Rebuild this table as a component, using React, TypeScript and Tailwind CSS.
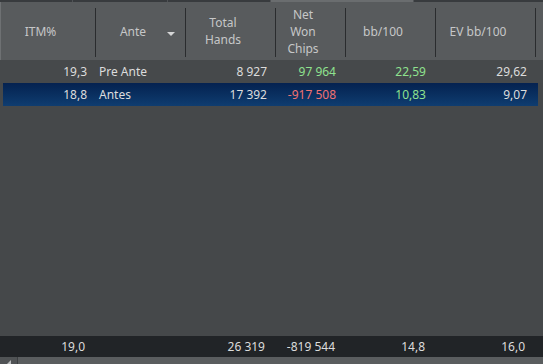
import { ReactNode } from 'react'

const COLS = 'grid grid-cols-[95px_90px_90px_70px_90px_100px_1fr]'
const COLS_SELECTED = 'grid grid-cols-[92px_90px_90px_70px_90px_100px_1fr]'

const HEADERS: { label: ReactNode; arrow?: boolean }[] = [
  { label: 'ITM%' },
  { label: 'Ante', arrow: true },
  { label: <>Total<br />Hands</> },
  { label: <>Net<br />Won<br />Chips</> },
  { label: 'bb/100' },
  { label: 'EV bb/100' },
]

const ROWS = [
  { itm: '19,3', ante: 'Pre Ante', hands: '8 927', net: '97 964', netUp: true, bb: '22,59', ev: '29,62' },
  { itm: '18,8', ante: 'Antes', hands: '17 392', net: '-917 508', netUp: false, bb: '10,83', ev: '9,07', selected: true },
]

function HeaderCell({ label, arrow }: { label: ReactNode; arrow?: boolean }) {
  return (
    <div className="flex h-full">
      <div className="flex-1 flex items-center justify-center pr-[15px] relative">
        <span className="text-center leading-[17px]">{label}</span>
        {arrow && (
          <svg className="absolute right-[10px] top-[30px]" width="8" height="4" viewBox="0 0 8 4">
            <path d="M0 0 L8 0 L4 4 Z" fill="#d4d5d6" />
          </svg>
        )}
      </div>
      <div className="w-px bg-[#2a2c2e] mt-[6px] mb-[3px]" />
    </div>
  )
}

export default function App() {
  return (
    <div
      className="w-[543px] h-[364px] flex flex-col bg-[#45484a] text-[12px] overflow-hidden"
      style={{ fontFamily: '"Noto Sans", "Open Sans", sans-serif' }}
    >
      <div className="flex h-[2px] shrink-0 gap-px bg-[#505356]">
        <div className="w-[72px] bg-[#383b3e]" />
        <div className="w-[94px] bg-[#383b3e]" />
        <div className="w-[102px] bg-[#383b3e]" />
        <div className="w-[142px] bg-[#6a6d6f]" />
        <div className="flex-1 bg-[#383b3e]" />
      </div>

      <div className={`${COLS} h-[58px] shrink-0 bg-[#585b5d] text-[#c6c7c8] border-l border-[#6e7173]`}>
        {HEADERS.map((h, i) => (
          <HeaderCell key={i} label={h.label} arrow={h.arrow} />
        ))}
        <div />
      </div>

      <div className="flex-1 flex flex-col">
        {ROWS.map((r) => (
          <div
            key={r.ante}
            className={`h-[23px] items-center text-[#dcdcdc] ${
              r.selected
                ? `${COLS_SELECTED} bg-gradient-to-b from-[#052250] to-[#0f3d70] ml-[3px] mr-[5px]`
                : `${COLS} bg-[#46494b]`
            }`}
          >
            <div className="text-right pr-[8px]">{r.itm}</div>
            <div className="pl-[4px]">{r.ante}</div>
            <div className="text-right pr-[8px]">{r.hands}</div>
            <div className={`text-right pr-[9px] ${r.netUp ? 'text-[#8fe28f]' : 'text-[#f07272]'}`}>{r.net}</div>
            <div className="text-right pr-[9px] text-[#8fe28f]">{r.bb}</div>
            <div className="text-right pr-[8px]">{r.ev}</div>
            <div />
          </div>
        ))}
      </div>

      <div className={`${COLS} h-[21px] shrink-0 items-center bg-[#212427] text-[#dcdcdc]`}>
        <div className="text-right pr-[10px]">19,0</div>
        <div />
        <div className="text-right pr-[10px]">26 319</div>
        <div className="text-right pr-[10px]">-819 544</div>
        <div className="text-right pr-[10px]">14,8</div>
        <div className="text-right pr-[10px]">16,0</div>
        <div />
      </div>

      <div className="flex h-[7px] shrink-0 bg-[#5a5d5f]">
        <div className="w-[18px] bg-[#505355] border-r border-[#3c3f41] flex items-end justify-center">
          <svg width="4" height="4" viewBox="0 0 4 4">
            <path d="M4 0 L4 4 L0 4 Z" fill="#b9bbbc" />
          </svg>
        </div>
      </div>
    </div>
  )
}
